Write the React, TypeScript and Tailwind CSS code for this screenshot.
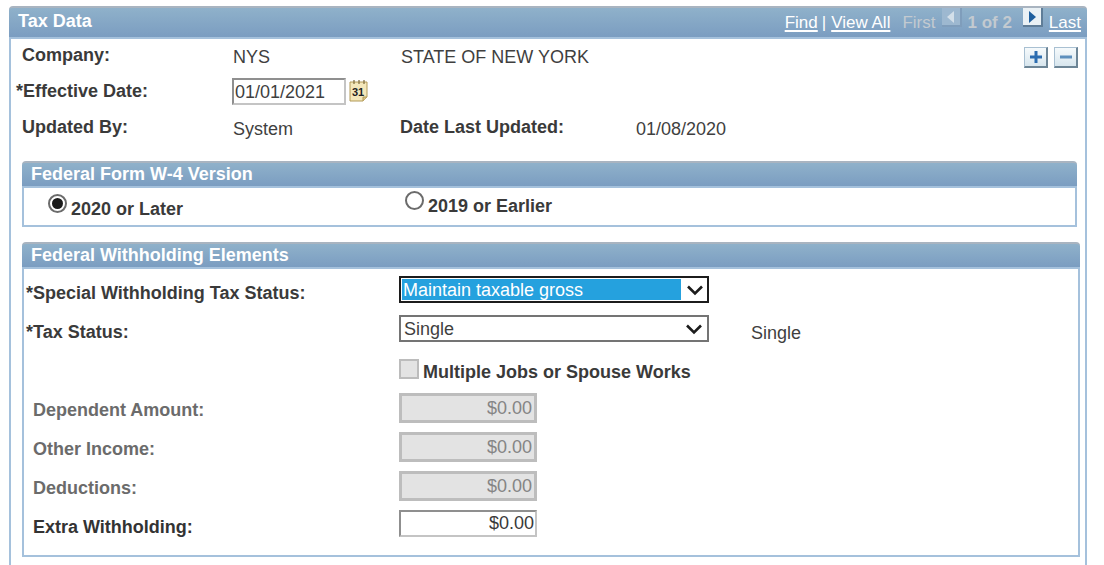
import type { ReactNode } from "react";

const font = "font-['Liberation_Sans',Arial,sans-serif]";

function PanelHeader({ title, children, className }: { title: string; children?: ReactNode; className: string }) {
  return (
    <div className={`flex items-start rounded-t-[4px] border-t-2 border-[#a9b4c0] bg-gradient-to-b from-[#8fb1ca] to-[#7b9dc1] font-bold text-white ${className}`}>
      <span>{title}</span>
      {children}
    </div>
  );
}

function Label({ children, className = "" }: { children: ReactNode; className?: string }) {
  return <span className={`text-[18px] leading-[18px] font-bold text-[#3a3a3a] ${className}`}>{children}</span>;
}

function PagerButton({ direction, disabled }: { direction: "left" | "right"; disabled?: boolean }) {
  return (
    <span
      className={`mt-[1px] flex h-[19px] w-[20px] items-center justify-center border-r-2 border-b-2 ${
        disabled ? "border-[#7f9dbb] bg-[#9db8d0]" : "border-[#5f7d98] bg-[#eaf1f5]"
      }`}
    >
      <svg width="10" height="14" viewBox="0 0 10 14">
        <path d={direction === "left" ? "M8 1v12L1 7z" : "M2 1v12l7-6z"} fill={disabled ? "#d3dfe9" : "#1f5f9e"} />
      </svg>
    </span>
  );
}

function GridButton({ minus }: { minus?: boolean }) {
  return (
    <span className="flex h-[21px] w-[24px] items-center justify-center border border-[#a9c0d2] border-r-2 border-b-2 border-r-[#6d8596] border-b-[#6d8596] bg-gradient-to-b from-[#f6fafc] to-[#d8e6ee]">
      <svg width="14" height="14" viewBox="0 0 14 14">
        <path d={minus ? "M1 5.5h12v3H1z" : "M5.5 1h3v4.5H13v3H8.5V13h-3V8.5H1v-3h4.5z"} fill={minus ? "#5d8fbd" : "#2b6cb0"} />
      </svg>
    </span>
  );
}

function Radio({ checked }: { checked?: boolean }) {
  return (
    <span className="flex h-[19px] w-[19px] shrink-0 items-center justify-center rounded-full border-2 border-[#6b6b6b] bg-white">
      {checked && <span className="h-[11px] w-[11px] rounded-full bg-[#1a1a1a]" />}
    </span>
  );
}

function Chevron() {
  return (
    <svg width="18" height="12" viewBox="0 0 18 12" className="shrink-0">
      <path d="M2 2.5l7 7 7-7" fill="none" stroke="#1c1c1c" strokeWidth="2.6" />
    </svg>
  );
}

function Amount({ label, disabled, className }: { label: string; disabled?: boolean; className: string }) {
  return (
    <div className={`flex items-start ${className}`}>
      <Label className={`mt-[8px] ml-[9px] w-[366px] ${disabled ? "text-[#6b6b6b]" : "text-[#333333]"}`}>{label}</Label>
      {disabled ? (
        <input
          readOnly
          value="$0.00"
          className="h-[30px] w-[138px] border-[3px] border-[#bdbdbd] bg-[#e3e3e3] pr-[2px] text-right text-[18px] text-[#858585] outline-none"
        />
      ) : (
        <input
          readOnly
          value="$0.00"
          className="h-[27px] w-[138px] border-2 border-[#c4c4c4] border-t-[#8f8f8f] border-l-[#8f8f8f] bg-white pr-[1px] text-right text-[18px] text-[#3a3a3a] outline-none"
        />
      )}
    </div>
  );
}

export default function App() {
  return (
    <div className={`h-[565px] w-[1104px] overflow-hidden bg-white pt-[6px] pl-[9px] ${font}`}>
      <div className="w-[1078px]">
        <PanelHeader title="Tax Data" className="h-[31px] pl-[9px] text-[18px] leading-[26px]">
          <div className="mt-[-1px] ml-auto flex items-start pr-[6px] text-[17px] font-normal leading-[32px]">
            <span className="underline decoration-2 underline-offset-2">Find</span>
            <span className="ml-[4px]">|</span>
            <span className="ml-[5px] underline decoration-2 underline-offset-2">View All</span>
            <span className="ml-[12px] text-[#c3cad0]">First</span>
            <span className="ml-[7px]"><PagerButton direction="left" disabled /></span>
            <span className="ml-[5px] font-bold text-[#c3cad0]">1 of 2</span>
            <span className="ml-[11px]"><PagerButton direction="right" /></span>
            <span className="ml-[6px] underline decoration-2 underline-offset-2">Last</span>
          </div>
        </PanelHeader>

        <div className="h-[528px] border-x-2 border-t-2 border-[#a5c1dc]">
          <div className="flex h-[39px] items-start text-[18px] text-[#3f3f3f]">
            <Label className="mt-[7px] ml-[11px] w-[211px]">Company:</Label>
            <span className="mt-[8px] w-[168px] leading-[20px]">NYS</span>
            <span className="mt-[8px] leading-[20px]">STATE OF NEW YORK</span>
            <div className="mt-[8px] ml-auto flex gap-[6px] pr-[7px]">
              <GridButton />
              <GridButton minus />
            </div>
          </div>

          <div className="flex h-[37px] items-start">
            <Label className="mt-[4px] ml-[5px] w-[216px]">*Effective Date:</Label>
            <input
              readOnly
              value="01/01/2021"
              className="h-[27px] w-[114px] border-2 border-[#c4c4c4] border-t-[#8f8f8f] border-l-[#8f8f8f] bg-white pt-[2px] pl-[1px] text-[18px] text-[#3f3f3f] outline-none"
            />
            <svg width="20" height="24" viewBox="0 0 20 24" className="mt-[1px] ml-[3px]">
              <path d="M1 3h17v15l-4 4H1z" fill="#f4e7ba" stroke="#b29a58" />
              <path d="M14 22v-4h4" fill="#d9c284" stroke="#b29a58" />
              <path d="M5 1v4M10 1v4M15 1v4" stroke="#7d6a3a" strokeWidth="1.2" />
              <text x="3" y="17" fontSize="11" fontWeight="700" fill="#222222" fontFamily="Liberation Sans">31</text>
            </svg>
          </div>

          <div className="flex h-[46px] items-start text-[18px] text-[#3f3f3f]">
            <Label className="mt-[3px] ml-[11px] w-[211px]">Updated By:</Label>
            <span className="mt-[4px] w-[167px] leading-[20px]">System</span>
            <Label className="mt-[3px] w-[236px]">Date Last Updated:</Label>
            <span className="mt-[4px] leading-[20px]">01/08/2020</span>
          </div>

          <section className="ml-[11px] w-[1055px]">
            <PanelHeader title="Federal Form W-4 Version" className="h-[25px] pl-[9px] text-[18px] leading-[23px]" />
            <div className="flex h-[41px] items-start border-x-2 border-y-2 border-[#a5c1dc] bg-white">
              <div className="mt-[6px] ml-[24px] flex w-[357px] items-start gap-[4px]">
                <Radio checked />
                <Label className="mt-[6px] text-[#2f2f2f]">2020 or Later</Label>
              </div>
              <div className="mt-[3px] flex items-start gap-[4px]">
                <Radio />
                <Label className="mt-[6px] text-[#2f2f2f]">2019 or Earlier</Label>
              </div>
            </div>
          </section>

          <section className="mt-[15px] ml-[11px] w-[1058px]">
            <PanelHeader title="Federal Withholding Elements" className="h-[25px] pl-[9px] text-[18px] leading-[23px]" />
            <div className="h-[290px] border-x-2 border-y-2 border-[#a5c1dc] bg-white pt-[7px]">
              <div className="flex items-start">
                <Label className="mt-[8px] ml-[2px] w-[373px]">*Special Withholding Tax Status:</Label>
                <div className="flex h-[27px] w-[310px] items-center border-2 border-[#1c1c1c] bg-white pr-[3px] pl-[1px]">
                  <span className="flex h-[21px] flex-1 items-center bg-[#25a1de] pt-[1px] pl-[1px] text-[18px] text-white">Maintain taxable gross</span>
                  <span className="ml-[5px]"><Chevron /></span>
                </div>
              </div>

              <div className="mt-[12px] flex items-start">
                <Label className="mt-[8px] ml-[2px] w-[373px]">*Tax Status:</Label>
                <div className="flex h-[27px] w-[310px] items-center justify-between border-2 border-[#747474] bg-white pr-[4px] pl-[3px] text-[18px] text-[#3f3f3f]">
                  <span className="pt-[1px]">Single</span>
                  <Chevron />
                </div>
                <span className="mt-[8px] ml-[42px] text-[18px] leading-[20px] text-[#3f3f3f]">Single</span>
              </div>

              <div className="mt-[16px] ml-[375px] flex items-start gap-[4px]">
                <span className="h-[20px] w-[20px] border-2 border-[#bcbcbc] bg-[#e3e3e3]" />
                <Label className="mt-[4px] text-[#3a3a3a]">Multiple Jobs or Spouse Works</Label>
              </div>

              <Amount label="Dependent Amount:" disabled className="mt-[12px]" />
              <Amount label="Other Income:" disabled className="mt-[9px]" />
              <Amount label="Deductions:" disabled className="mt-[9px]" />
              <Amount label="Extra Withholding:" className="mt-[9px]" />
            </div>
          </section>
        </div>
      </div>
    </div>
  );
}
